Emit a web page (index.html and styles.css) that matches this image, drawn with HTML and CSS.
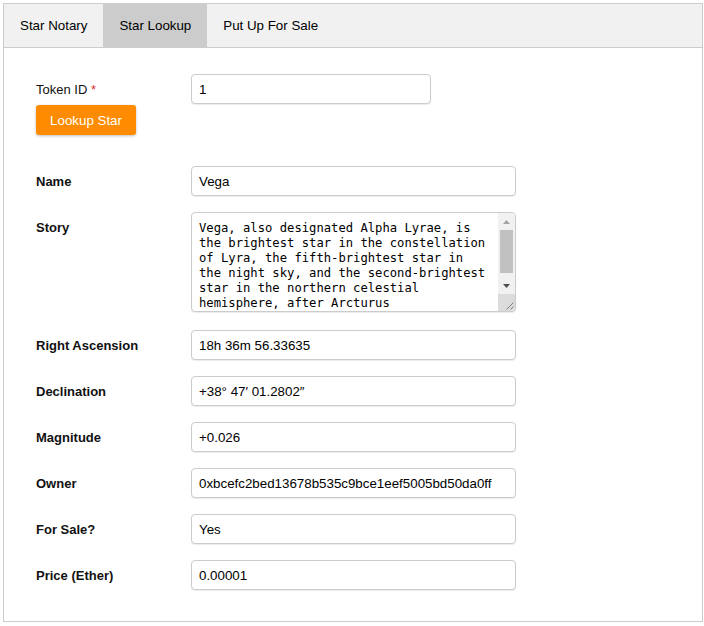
FILE: index.html
```html
<!DOCTYPE html>
<html lang="en">
<head>
<meta charset="utf-8">
<title>Star Notary</title>
<link rel="stylesheet" href="styles.css">
</head>
<body>
<div class="tabs">
  <div class="tabbar">
    <button class="tab">Star Notary</button>
    <button class="tab active">Star Lookup</button>
    <button class="tab">Put Up For Sale</button>
  </div>
  <div class="panel">
    <div class="row row-token">
      <div class="label-col">
        <label class="label label-plain">Token ID <span class="req">*</span></label>
        <button class="btn">Lookup Star</button>
      </div>
      <input class="field field-short" type="text" value="1">
    </div>
    <div class="row row-name">
      <label class="label">Name</label>
      <input class="field" type="text" value="Vega">
    </div>
    <div class="row">
      <label class="label">Story</label>
      <div class="story-box">
        <textarea class="story">Vega, also designated Alpha Lyrae, is the brightest star in the constellation of Lyra, the fifth-brightest star in the night sky, and the second-brightest star in the northern celestial hemisphere, after Arcturus</textarea>
        <div class="vscroll" aria-hidden="true">
          <span class="sb-btn sb-up">
            <svg width="7" height="4" viewBox="0 0 7 4"><polygon points="3.5,0 7,4 0,4" fill="#a3a3a3"/></svg>
          </span>
          <span class="sb-track"><span class="sb-thumb"></span></span>
          <span class="sb-btn sb-down">
            <svg width="7" height="4" viewBox="0 0 7 4"><polygon points="0,0 7,0 3.5,4" fill="#505050"/></svg>
          </span>
          <span class="sb-grip">
            <svg width="17" height="17" viewBox="0 0 17 17"><line x1="15.5" y1="8.5" x2="8.5" y2="15.5" stroke="#808080" stroke-width="1"/><line x1="15.5" y1="12.5" x2="12.5" y2="15.5" stroke="#808080" stroke-width="1"/></svg>
          </span>
        </div>
      </div>
    </div>
    <div class="row row-ra">
      <label class="label">Right Ascension</label>
      <input class="field" type="text" value="18h 36m 56.33635">
    </div>
    <div class="row">
      <label class="label">Declination</label>
      <input class="field" type="text" value="+38° 47′ 01.2802″">
    </div>
    <div class="row">
      <label class="label">Magnitude</label>
      <input class="field" type="text" value="+0.026">
    </div>
    <div class="row">
      <label class="label">Owner</label>
      <input class="field" type="text" value="0xbcefc2bed13678b535c9bce1eef5005bd50da0ff">
    </div>
    <div class="row">
      <label class="label">For Sale?</label>
      <input class="field" type="text" value="Yes">
    </div>
    <div class="row">
      <label class="label">Price (Ether)</label>
      <input class="field" type="text" value="0.00001">
    </div>
  </div>
</div>
</body>
</html>
```
FILE: styles.css
```css
html, body {
  margin: 0;
  padding: 0;
  background: #fff;
}
body {
  font-family: "Liberation Sans", Arial, sans-serif;
  color: #000;
}
.tabs {
  width: 700px;
  margin: 3px;
  box-sizing: border-box;
}
.tabbar {
  display: flex;
  border: 1px solid #ccc;
  background: #f1f1f1;
}
.tab {
  font-family: "Liberation Sans", Arial, sans-serif;
  font-size: 13.33px;
  line-height: 15px;
  color: #000;
  background: transparent;
  border: none;
  outline: none;
  margin: 0;
  padding: 14px 16px;
  cursor: pointer;
}
.tab.active {
  background: #ccc;
}
.panel {
  border: 1px solid #ccc;
  border-top: none;
  padding: 26px 32px 31px;
  display: flex;
  flex-direction: column;
  gap: 16px;
}
.row {
  display: flex;
  align-items: flex-start;
}
.row-name {
  margin-top: 15px;
}
.row-ra {
  margin-top: 2px;
}
.label-col {
  display: flex;
  flex-direction: column;
  align-items: flex-start;
  width: 155px;
}
.label {
  box-sizing: border-box;
  width: 155px;
  height: 30px;
  flex: none;
  padding-top: 2px;
  font-size: 13px;
  line-height: 28px;
  font-weight: bold;
  color: #111;
}
.label-plain {
  font-weight: normal;
}
.req {
  color: #e03030;
}
.btn {
  margin-top: 1px;
  width: 100px;
  height: 30px;
  padding: 0;
  border: none;
  border-radius: 3px;
  background: #ff8c00;
  color: #fff;
  font-family: "Liberation Sans", Arial, sans-serif;
  font-size: 13.33px;
  box-shadow: 0 1px 3px rgba(0, 0, 0, 0.25);
  cursor: pointer;
}
.field {
  box-sizing: border-box;
  width: 325px;
  height: 30px;
  margin: 0;
  padding: 0 7px;
  border: 1px solid #ccc;
  border-radius: 4px;
  box-shadow: 0 1px 1px rgba(0, 0, 0, 0.08);
  font-family: "Liberation Sans", Arial, sans-serif;
  font-size: 13.33px;
  color: #000;
  background: #fff;
}
.field-short {
  width: 240px;
}
.story-box {
  position: relative;
  width: 325px;
  height: 100px;
}
.story {
  display: block;
  box-sizing: border-box;
  width: 325px;
  height: 100px;
  margin: 0;
  padding: 8px 24px 8px 7px;
  border: 1px solid #ccc;
  border-radius: 4px;
  box-shadow: 0 1px 1px rgba(0, 0, 0, 0.08);
  font-family: "DejaVu Sans Mono", monospace;
  font-size: 12.2px;
  line-height: 15px;
  color: #000;
  overflow: hidden;
  resize: none;
}
.vscroll {
  position: absolute;
  top: 1px;
  right: 1px;
  bottom: 1px;
  width: 17px;
  display: flex;
  flex-direction: column;
  background: #f1f1f1;
  border-top-right-radius: 3px;
  border-bottom-right-radius: 3px;
  overflow: hidden;
}
.sb-btn {
  height: 17px;
  flex: none;
  display: flex;
  align-items: center;
  justify-content: center;
}
.sb-track {
  flex: 1;
  display: flex;
  flex-direction: column;
  padding: 0 2px;
}
.sb-thumb {
  height: 43px;
  background: #c1c1c1;
}
.sb-grip {
  height: 17px;
  flex: none;
  background: #dcdcdc;
  display: block;
}
.sb-grip svg {
  display: block;
}
```
